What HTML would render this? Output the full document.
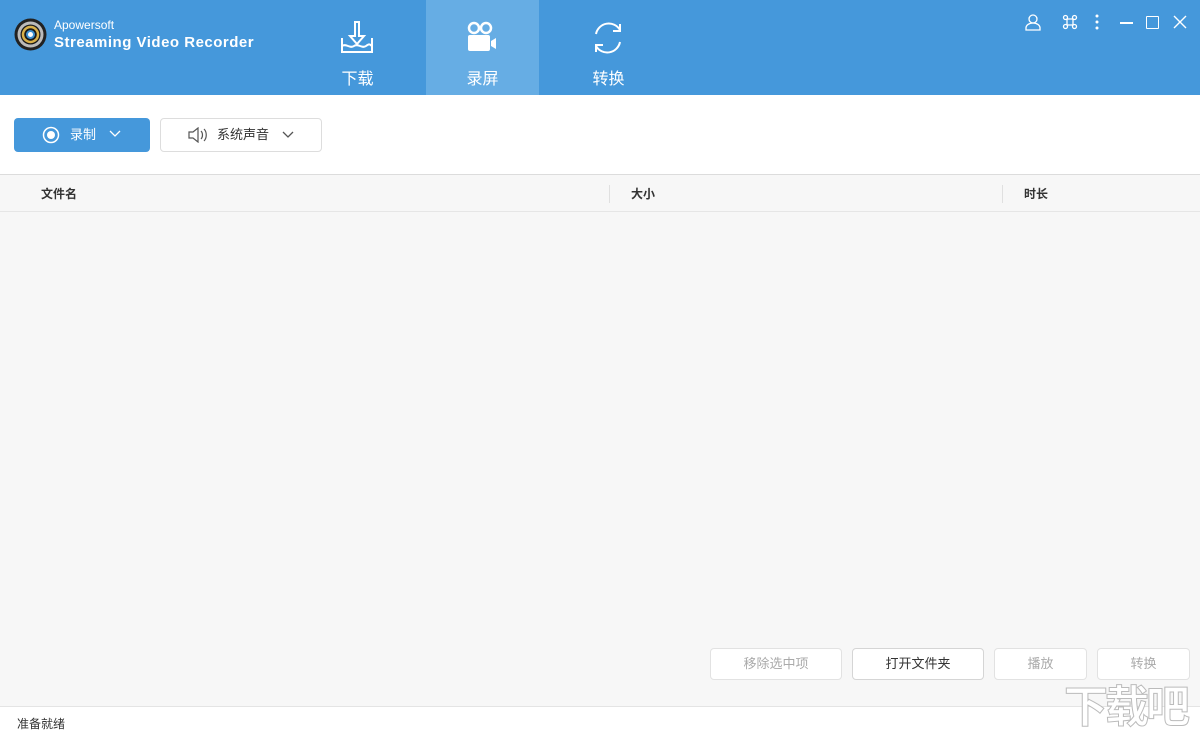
<!DOCTYPE html>
<html><head><meta charset="utf-8"><style>
*{margin:0;padding:0;box-sizing:border-box}
html,body{width:1200px;height:742px;overflow:hidden}
body{background:#f7f7f7;font-family:"Liberation Sans","Noto Sans CJK SC",sans-serif;position:relative}
.top{position:absolute;left:0;top:0;width:1200px;height:95px;background:#4598db}
.tab{position:absolute;top:0;height:95px;width:113px;color:#fff;text-align:center;font-size:16px}
.tab span{position:absolute;left:0;right:0;top:65px}
.tab svg{position:absolute;left:38px;top:20px}
.bar{position:absolute;left:0;top:95px;width:1200px;height:80px;background:#fff;border-bottom:1px solid #dcdcdc}
.hdr{position:absolute;left:0;top:176px;width:1200px;height:36px;border-bottom:1px solid #e6e6e6;background:#f7f7f7;font-size:12px;font-weight:bold;color:#333}
.hdr div{position:absolute;top:9px}
.sep{position:absolute;top:9px;width:1px;height:18px;background:#e0e0e0}
.btn{position:absolute;top:648px;height:32px;border:1px solid #e2e2e2;border-radius:4px;background:#fff;font-size:13px;color:#aaa;text-align:center;line-height:29px}
.status{position:absolute;left:0;top:706px;width:1200px;height:36px;background:#fff;border-top:1px solid #e4e4e4;font-size:12px;color:#333;padding:8px 17px}
</style></head><body>
<div class="top">
 <svg style="position:absolute;left:14px;top:18px" width="33" height="33" viewBox="0 0 33 33"><circle cx="16.5" cy="16.5" r="16" fill="#222"/><circle cx="16.5" cy="16.5" r="13" fill="#bbb"/><circle cx="16.5" cy="16.5" r="10" fill="#1b1b1b"/><circle cx="16.5" cy="16.5" r="7.5" fill="none" stroke="#d8b04a" stroke-width="2.5"/><circle cx="16.5" cy="16.5" r="4.5" fill="#3a8fd0"/><circle cx="16.5" cy="16.5" r="2.5" fill="#fff"/></svg>
 <div style="position:absolute;left:54px;top:18px;color:#fff;font-size:12px">Apowersoft</div>
 <div style="position:absolute;left:54px;top:34px;color:#fff;font-size:15px;font-weight:bold;letter-spacing:0.5px">Streaming Video Recorder</div>
 <div class="tab" style="left:301px"><svg width="36" height="36" viewBox="0 0 36 36" fill="none" stroke="#fff" stroke-width="2"><path d="M16 2h4v14h5l-7 8-7-8h5z"/><path d="M3 18v14h30V18"/><path d="M3 26c4-3 8 3 12 0s8 3 12 0 4-1 6 0"/></svg><span>下载</span></div>
 <div class="tab" style="left:426px;background:#66ade4"><svg width="36" height="36" viewBox="0 0 36 36"><circle cx="10" cy="8" r="5" fill="none" stroke="#fff" stroke-width="2.5"/><circle cx="22" cy="8" r="5" fill="none" stroke="#fff" stroke-width="2.5"/><rect x="4" y="15" width="22" height="16" rx="2" fill="#fff"/><path d="M27 21l5-3v11l-5-3z" fill="#fff"/></svg><span>录屏</span></div>
 <div class="tab" style="left:552px"><svg width="36" height="36" viewBox="0 0 36 36" fill="none" stroke="#fff" stroke-width="2"><path d="M6 14a13 13 0 0 1 24-4"/><path d="M30 4v7h-7"/><path d="M30 22a13 13 0 0 1-24 4"/><path d="M6 32v-7h7"/></svg><span>转换</span></div>
 <svg style="position:absolute;left:1024px;top:13px" width="18" height="18" viewBox="0 0 18 18" fill="none" stroke="#fff" stroke-width="1.3"><circle cx="9" cy="6" r="4"/><path d="M2 17v-2a7 5 0 0 1 14 0v2z"/></svg>
 <svg style="position:absolute;left:1062px;top:14px" width="16" height="16" viewBox="0 0 16 16" fill="none" stroke="#fff" stroke-width="1.3"><path d="M5 5v6M11 5v6M5 5h6M5 11h6"/><circle cx="3.5" cy="3.5" r="2"/><circle cx="12.5" cy="3.5" r="2"/><circle cx="3.5" cy="12.5" r="2"/><circle cx="12.5" cy="12.5" r="2"/></svg>
 <svg style="position:absolute;left:1095px;top:14px" width="4" height="16"><circle cx="2" cy="2" r="1.5" fill="#fff"/><circle cx="2" cy="8" r="1.5" fill="#fff"/><circle cx="2" cy="14" r="1.5" fill="#fff"/></svg>
 <div style="position:absolute;left:1120px;top:22px;width:13px;height:1.5px;background:#fff"></div>
 <div style="position:absolute;left:1146px;top:16px;width:13px;height:13px;border:1.3px solid #fff;border-radius:1px"></div>
 <svg style="position:absolute;left:1173px;top:15px" width="14" height="14" stroke="#fff" stroke-width="1.4"><path d="M1 1l12 12M13 1L1 13"/></svg>
</div>
<div class="bar">
 <div style="position:absolute;left:14px;top:23px;width:136px;height:34px;background:#4598db;border-radius:4px;color:#fff;font-size:13px">
  <svg style="position:absolute;left:28px;top:8px" width="18" height="18"><circle cx="9" cy="9" r="7.5" fill="none" stroke="#fff" stroke-width="1.5"/><circle cx="9" cy="9" r="4" fill="#fff"/></svg>
  <span style="position:absolute;left:56px;top:6px">录制</span>
  <svg style="position:absolute;left:95px;top:12px" width="12" height="8" fill="none" stroke="#fff" stroke-width="1.3"><path d="M1 1l5 5 5-5"/></svg>
 </div>
 <div style="position:absolute;left:160px;top:23px;width:162px;height:34px;border:1px solid #ddd;border-radius:4px;color:#333;font-size:13px">
  <svg style="position:absolute;left:27px;top:8px" width="20" height="16" fill="none" stroke="#555" stroke-width="1.2"><path d="M1 5h4l5-4v14l-5-4H1z"/><path d="M13 4c2 2 2 6 0 8M16 2c3 3 3 9 0 12"/></svg>
  <span style="position:absolute;left:56px;top:5px">系统声音</span>
  <svg style="position:absolute;left:121px;top:12px" width="12" height="8" fill="none" stroke="#555" stroke-width="1.3"><path d="M1 1l5 5 5-5"/></svg>
 </div>
</div>
<div class="hdr"><div style="left:41px">文件名</div><div class="sep" style="left:609px"></div><div style="left:631px">大小</div><div class="sep" style="left:1002px"></div><div style="left:1024px">时长</div></div>
<div class="btn" style="left:710px;width:132px">移除选中项</div>
<div class="btn" style="left:852px;width:132px;color:#333;border-color:#d5d5d5">打开文件夹</div>
<div class="btn" style="left:994px;width:93px">播放</div>
<div class="btn" style="left:1097px;width:93px">转换</div>
<div class="status">准备就绪</div>
<div style="position:absolute;left:1064px;top:680px;font-size:44px;line-height:56px;white-space:nowrap;color:#fff;-webkit-text-stroke:1px #bbb;font-weight:bold;letter-spacing:-3px">下载吧</div>
</body></html>
